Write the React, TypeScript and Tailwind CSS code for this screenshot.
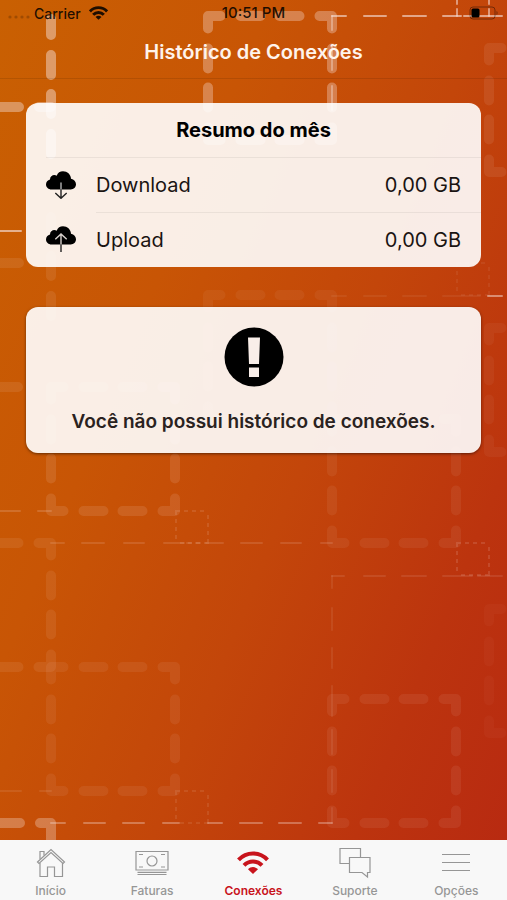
import type { ReactNode } from 'react';

type Square = { x: number; y: number; opacity: number };
type Dash = { d: string; opacity: number };

// big dashed squares, 124 units wide
const squares: Square[] = [
  { x: 208, y: 16, opacity: 0.34 },
  { x: 489, y: 48, opacity: 0.09 },
  { x: 208, y: 295, opacity: 0.06 },
  { x: 489, y: 328, opacity: 0.05 },
  { x: 51, y: 387, opacity: 0.12 },
  { x: 332, y: 419, opacity: 0.07 },
  { x: -73, y: 543, opacity: 0.09 },
  { x: 51, y: 667, opacity: 0.08 },
  { x: 332, y: 699, opacity: 0.08 },
  { x: 489, y: 609, opacity: 0.03 },
];

const thickDashes: Dash[] = [
  { d: 'M51 19V35 M51 55V75 M51 94V114 M51 134V154', opacity: 0.48 },
  { d: 'M-5 107H19 M39 107H51', opacity: 0.42 },
  { d: 'M51 217V237 M51 256V276 M51 296V316', opacity: 0.1 },
  { d: 'M-5 263H19 M-5 387H18', opacity: 0.1 },
  { d: 'M-5 823H20 M40 823H51V845', opacity: 0.32 },
];

const thinDashes: Dash[] = [
  { d: 'M332 16H346 M364 16H386 M403 16H426 M443 16H461 M464 16H472 M478 16H502', opacity: 0.62 },
  { d: 'M457 0V4 M457 9V16 M489 0V4 M489 9V16', opacity: 0.55 },
  { d: 'M332 16V30 M332 46V70 M332 86V110', opacity: 0.4 },
  { d: 'M0 231H21', opacity: 0.65 },
  { d: 'M488 296H502', opacity: 0.5 },
  { d: 'M332 296H346 M364 296H386 M403 296H426 M443 296H480', opacity: 0.07 },
  { d: 'M0 511H20 M38 511H51', opacity: 0.18 },
  { d: 'M51 543H64 M82 543H104 M124 543H144 M164 543H184 M187 543H191 M196 543H200 M206 543H223 M241 543H262 M281 543H301 M321 543H332', opacity: 0.14 },
  { d: 'M332 576H344 M364 576H385 M402 576H426 M443 576H472 M478 576H502', opacity: 0.11 },
  { d: 'M332 576V588 M332 608V630 M332 648V668 M332 686V716 M332 730V754 M332 770V792 M332 808V823', opacity: 0.09 },
  { d: 'M0 791H21 M40 791H51', opacity: 0.1 },
  { d: 'M51 823H65 M84 823H105 M123 823H144 M163 823H179 M208 823H222 M240 823H262 M279 823H301 M319 823H332', opacity: 0.34 },
];

// small finely dashed squares, 32 units wide
const boxes: Square[] = [
  { x: 457, y: 263, opacity: 0.07 },
  { x: 176, y: 511, opacity: 0.12 },
  { x: 457, y: 543, opacity: 0.14 },
  { x: 176, y: 791, opacity: 0.1 },
];

function Pattern() {
  return (
    <svg
      aria-hidden="true"
      viewBox="0 0 507 840"
      preserveAspectRatio="xMidYMid slice"
      className="absolute inset-0 h-full w-full"
      fill="none"
      stroke="#f5dfd8"
    >
      {squares.map((s) => (
        <path
          key={`${s.x}-${s.y}`}
          d={`M${s.x} ${s.y}h124v124h-124z`}
          strokeWidth="10"
          strokeLinecap="round"
          strokeLinejoin="round"
          strokeDasharray="25 20 20 19 20 20"
          strokeDashoffset="12.5"
          opacity={s.opacity}
        />
      ))}
      {thickDashes.map((l) => (
        <path key={l.d} d={l.d} strokeWidth="10" strokeLinecap="round" strokeLinejoin="round" opacity={l.opacity} />
      ))}
      {thinDashes.map((l) => (
        <path key={l.d} d={l.d} strokeWidth="2" strokeLinecap="round" opacity={l.opacity} />
      ))}
      {boxes.map((b) => (
        <path
          key={`${b.x}-${b.y}`}
          d={`M${b.x} ${b.y}h32v32h-32z`}
          strokeWidth="2"
          strokeDasharray="8 4 4 4 4 4 4"
          strokeDashoffset="4"
          opacity={b.opacity}
        />
      ))}
    </svg>
  );
}

function WifiIcon({ className, weight = 4 }: { className: string; weight?: number }) {
  return (
    <svg viewBox="0 0 32 23" className={className} fill="none" stroke="currentColor" strokeWidth={weight} aria-hidden="true">
      <path d="M1.5 8.8C9.5 .3 22.5 .3 30.5 8.8" />
      <path d="M7 14.4C12 9.2 20 9.2 25 14.4" />
      <path d="M16 23L11 18.2C13.8 15.4 18.2 15.4 21 18.2Z" fill="currentColor" stroke="none" />
    </svg>
  );
}

function CloudIcon({ direction }: { direction: 'down' | 'up' }) {
  return (
    <svg viewBox="0 0 30 28" className="h-7 w-[30px]" fill="none" strokeWidth="1.4" aria-hidden="true">
      <path
        d="M5.5 18.5C2.5 18.5 0 16.3 0 13.5C0 11 1.7 9 4 8.5C4 5.6 6.2 4 8.3 4C9.2 4 10 4.2 10.7 4.7C11.7 1.8 14.1 .3 17 .3C21.3 .3 24.7 3.4 25 7.7C28 8.4 30 10.6 30 13.3C30 16.3 27.7 18.5 24.7 18.5Z"
        fill="#000"
      />
      {direction === 'down' ? (
        <>
          <path d="M15 11.5V27 M9.3 22L15 27.3L20.7 22" stroke="#222" />
          <path d="M15 11.5V18.5" stroke="#aaa" />
        </>
      ) : (
        <>
          <path d="M15 18.5V8 M9.3 13.3L15 8L20.7 13.3" stroke="#d8d0cc" />
          <path d="M15 18.5V26" stroke="#222" />
        </>
      )}
    </svg>
  );
}

function StatusBar() {
  return (
    <div className="grid h-[26px] grid-cols-3 items-center px-2 text-black/85">
      <div className="flex items-center gap-1 text-[14px] font-medium">
        <svg viewBox="0 0 22 4" className="mt-2 h-1 w-[22px]" fill="#000" opacity="0.2" aria-hidden="true">
          <circle cx="2" cy="2" r="1.6" />
          <circle cx="8" cy="2" r="1.6" />
          <circle cx="14" cy="2" r="1.6" />
          <circle cx="20" cy="2" r="1.6" />
        </svg>
        <span>Carrier</span>
        <WifiIcon className="ml-1 h-[14px] w-[19px]" weight={5} />
      </div>
      <span className="text-center text-[15px] font-medium">10:51 PM</span>
      <svg viewBox="0 0 30 14" className="h-[14px] w-[30px] justify-self-end" fill="none" aria-hidden="true">
        <rect x="1" y="1" width="25" height="12" rx="3" stroke="#000" strokeOpacity="0.4" />
        <rect x="2.5" y="2.5" width="8" height="9" rx="1.5" fill="#000" />
        <path d="M27.5 5v4c1.5-.5 1.5-3.5 0-4z" fill="#000" fillOpacity="0.4" />
      </svg>
    </div>
  );
}

const usage: { label: string; value: string; direction: 'down' | 'up' }[] = [
  { label: 'Download', value: '0,00 GB', direction: 'down' },
  { label: 'Upload', value: '0,00 GB', direction: 'up' },
];

const tabs: { label: string; icon: ReactNode; active?: boolean }[] = [
  {
    label: 'Início',
    icon: (
      <>
        <path d="M2.5 15L16 2.5L29.5 15L28 16.5L16 5.5L4 16.5Z" />
        <path d="M5 12V4.500H9V8.500" />
        <path d="M5 16V29.500H12.500V20H19.500V29.500H27.500V16" />
      </>
    ),
  },
  {
    label: 'Faturas',
    icon: (
      <>
        <path d="M0 4.500H32V23H0Z M1.500 25.300H30.500 M1.500 27.500H30.500" />
        <circle cx="16" cy="14" r="5" />
        <path d="M3 7.500H7 M25 7.500H29 M3 20H7 M25 20H29" />
      </>
    ),
  },
  { label: 'Conexões', icon: null, active: true },
  {
    label: 'Suporte',
    icon: (
      <>
        <path d="M10.500 16.500H1V1.500H21.500V10" />
        <path d="M10.500 10.500H31V25.500H28.500V30L23 25.500H10.500Z" />
      </>
    ),
  },
  { label: 'Opções', icon: <path d="M2 7.500H30 M2 15.500H30 M2 23.500H30" /> },
];

export default function App() {
  return (
    <div className="flex min-h-screen flex-col bg-[#f8f8f8] font-['Inter','Liberation_Sans',sans-serif]">
      <div className="relative isolate flex flex-1 flex-col bg-[linear-gradient(112deg,#c96002_0%,#c85505_32%,#c3460a_58%,#bc340e_82%,#b82a11_100%)]">
        <div className="absolute inset-0 -z-10 overflow-hidden">
          <Pattern />
        </div>

        <header className="border-b border-black/10">
          <StatusBar />
          <h1 className="flex h-[52px] items-center justify-center text-[20px] font-semibold text-[#fff4ec]">
            Histórico de Conexões
          </h1>
        </header>

        <main className="flex flex-col gap-10 px-[26px] py-6">
          <section className="overflow-hidden rounded-xl bg-white/90 text-black">
            <h2 className="flex h-[54px] items-center justify-center text-[20px] font-bold">Resumo do mês</h2>
            <dl>
              {usage.map((row, i) => (
                <div key={row.label} className="flex h-[55px] items-center pl-5 text-[20px] text-[#1a1412]">
                  <CloudIcon direction={row.direction} />
                  <div
                    className={
                      i === 0
                        ? 'relative ml-5 flex h-full flex-1 items-center justify-between pr-5 before:absolute before:top-0 before:right-0 before:-left-[50px] before:h-px before:bg-black/6'
                        : 'ml-5 flex h-full flex-1 items-center justify-between border-t border-black/6 pr-5'
                    }
                  >
                    <dt>{row.label}</dt>
                    <dd>{row.value}</dd>
                  </div>
                </div>
              ))}
            </dl>
          </section>

          <section className="flex flex-col items-center rounded-xl bg-white/90 px-4 pt-5 pb-4 shadow-[0_1px_3px_rgba(0,0,0,0.5)]">
            <svg viewBox="0 0 60 60" className="size-[60px]" aria-hidden="true">
              <circle cx="30" cy="30" r="29.5" fill="#000" />
              <path d="M24 10.5H36L35 37H25Z M25 40.5H35V50H25Z" fill="#f9eee9" />
            </svg>
            <p className="mt-5 text-center text-[19px] leading-[30px] font-semibold text-[#2a2220]">
              Você não possui histórico de conexões.
            </p>
          </section>
        </main>
      </div>

      <nav className="grid h-[60px] grid-cols-5">
        {tabs.map((tab) => (
          <a
            key={tab.label}
            href="#"
            aria-current={tab.active ? 'page' : undefined}
            className={
              tab.active
                ? 'flex flex-col items-center pt-[7px] text-[12px] leading-4 font-semibold text-[#c8141c]'
                : 'flex flex-col items-center pt-[7px] text-[12px] leading-4 font-medium text-[#969696]'
            }
          >
            <span className="flex h-9 items-start">
              {tab.active ? (
                <WifiIcon className="mt-1 h-[23px] w-8" />
              ) : (
                <svg
                  viewBox="0 0 32 32"
                  className="size-8 overflow-visible"
                  fill="none"
                  stroke="currentColor"
                  strokeWidth="1.2"
                  aria-hidden="true"
                >
                  {tab.icon}
                </svg>
              )}
            </span>
            <span>{tab.label}</span>
          </a>
        ))}
      </nav>
    </div>
  );
}
